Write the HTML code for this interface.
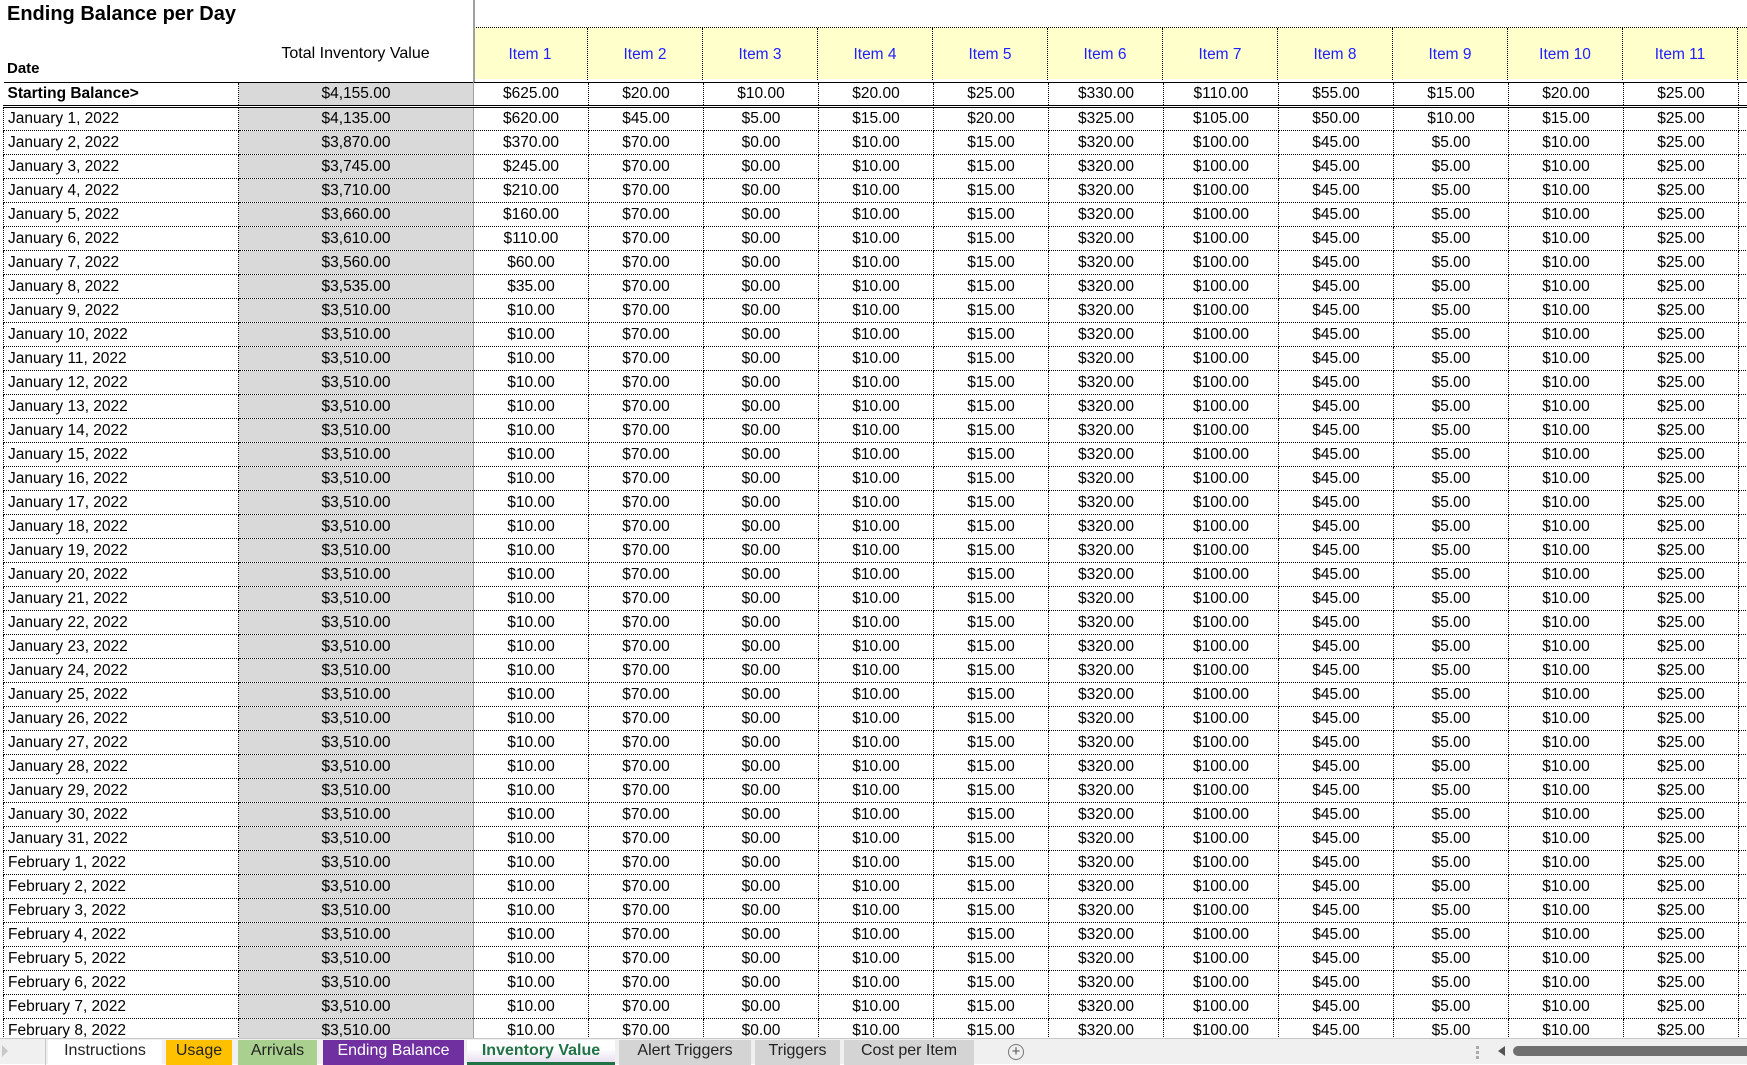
<!DOCTYPE html>
<html><head><meta charset="utf-8"><style>
*{margin:0;padding:0;box-sizing:border-box}
body{width:1747px;height:1064px;overflow:hidden;background:#fff;font-family:"Liberation Sans",Arial,sans-serif;font-size:15.5px;color:#000;position:relative}
.ab{position:absolute}
#title{left:7px;top:3px;font-size:20px;font-weight:bold}
#date{left:7px;top:60px;font-weight:bold;font-size:15px}
#tiv{left:238px;width:235px;top:45px;text-align:center;font-size:16px}
#yel{left:473px;top:27px;width:1274px;height:52px;background:#ffffcc;border-top:1px dotted #000}
.ih{position:absolute;top:0;height:52px;width:115px;line-height:54px;text-align:center;color:#2020ff;border-right:1px dotted #000}
#vline{left:473px;top:0;width:2px;height:82px;background:#a0a0a0}
table{position:absolute;left:3px;top:82px;border-collapse:collapse;table-layout:fixed;width:1744px}
td{height:24px;padding:0;text-align:center;border-right:1px dotted #000;border-bottom:1px dotted #000;white-space:nowrap;overflow:hidden;line-height:22px}
td:first-child{text-align:left;padding-left:4px;border-left:1px dotted #000}
td:nth-child(2){background:#d9d9d9;border-right:1px solid #a0a0a0}
tr.sb td{border-top:1px solid #000;border-bottom:3px double #000;font-weight:normal}
tr.sb td:first-child{font-weight:bold;border-left:none}
tr.sb td:nth-child(2){border-left:1px dotted #000}
#tabs{left:0;top:1038px;width:1747px;height:26px;background:#f0f0f0;border-top:1px solid #c6c6c6}
.t{position:absolute;top:1px;height:25px;line-height:22px;text-align:center;font-size:16px;background:#d4d4d4;color:#222}
</style></head><body>
<div class="ab" id="title">Ending Balance per Day</div>
<div class="ab" id="date">Date</div>
<div class="ab" id="tiv">Total Inventory Value</div>
<div class="ab" id="yel">
<div class="ih" style="left:0">Item 1</div><div class="ih" style="left:115px">Item 2</div><div class="ih" style="left:230px">Item 3</div><div class="ih" style="left:345px">Item 4</div><div class="ih" style="left:460px">Item 5</div><div class="ih" style="left:575px">Item 6</div><div class="ih" style="left:690px">Item 7</div><div class="ih" style="left:805px">Item 8</div><div class="ih" style="left:920px">Item 9</div><div class="ih" style="left:1035px">Item 10</div><div class="ih" style="left:1150px">Item 11</div>
</div>
<div class="ab" id="vline"></div>
<table>
<colgroup><col style="width:235px"><col style="width:235px"><col style="width:115px"><col style="width:115px"><col style="width:115px"><col style="width:115px"><col style="width:115px"><col style="width:115px"><col style="width:115px"><col style="width:115px"><col style="width:115px"><col style="width:115px"><col style="width:115px"><col style="width:9px"></colgroup>
<tr class="sb"><td>Starting Balance&gt;<td>$4,155.00<td>$625.00<td>$20.00<td>$10.00<td>$20.00<td>$25.00<td>$330.00<td>$110.00<td>$55.00<td>$15.00<td>$20.00<td>$25.00<td></tr>
<tr><td>January 1, 2022<td>$4,135.00<td>$620.00<td>$45.00<td>$5.00<td>$15.00<td>$20.00<td>$325.00<td>$105.00<td>$50.00<td>$10.00<td>$15.00<td>$25.00<td></tr>
<tr><td>January 2, 2022<td>$3,870.00<td>$370.00<td>$70.00<td>$0.00<td>$10.00<td>$15.00<td>$320.00<td>$100.00<td>$45.00<td>$5.00<td>$10.00<td>$25.00<td></tr>
<tr><td>January 3, 2022<td>$3,745.00<td>$245.00<td>$70.00<td>$0.00<td>$10.00<td>$15.00<td>$320.00<td>$100.00<td>$45.00<td>$5.00<td>$10.00<td>$25.00<td></tr>
<tr><td>January 4, 2022<td>$3,710.00<td>$210.00<td>$70.00<td>$0.00<td>$10.00<td>$15.00<td>$320.00<td>$100.00<td>$45.00<td>$5.00<td>$10.00<td>$25.00<td></tr>
<tr><td>January 5, 2022<td>$3,660.00<td>$160.00<td>$70.00<td>$0.00<td>$10.00<td>$15.00<td>$320.00<td>$100.00<td>$45.00<td>$5.00<td>$10.00<td>$25.00<td></tr>
<tr><td>January 6, 2022<td>$3,610.00<td>$110.00<td>$70.00<td>$0.00<td>$10.00<td>$15.00<td>$320.00<td>$100.00<td>$45.00<td>$5.00<td>$10.00<td>$25.00<td></tr>
<tr><td>January 7, 2022<td>$3,560.00<td>$60.00<td>$70.00<td>$0.00<td>$10.00<td>$15.00<td>$320.00<td>$100.00<td>$45.00<td>$5.00<td>$10.00<td>$25.00<td></tr>
<tr><td>January 8, 2022<td>$3,535.00<td>$35.00<td>$70.00<td>$0.00<td>$10.00<td>$15.00<td>$320.00<td>$100.00<td>$45.00<td>$5.00<td>$10.00<td>$25.00<td></tr>
<tr><td>January 9, 2022<td>$3,510.00<td>$10.00<td>$70.00<td>$0.00<td>$10.00<td>$15.00<td>$320.00<td>$100.00<td>$45.00<td>$5.00<td>$10.00<td>$25.00<td></tr>
<tr><td>January 10, 2022<td>$3,510.00<td>$10.00<td>$70.00<td>$0.00<td>$10.00<td>$15.00<td>$320.00<td>$100.00<td>$45.00<td>$5.00<td>$10.00<td>$25.00<td></tr>
<tr><td>January 11, 2022<td>$3,510.00<td>$10.00<td>$70.00<td>$0.00<td>$10.00<td>$15.00<td>$320.00<td>$100.00<td>$45.00<td>$5.00<td>$10.00<td>$25.00<td></tr>
<tr><td>January 12, 2022<td>$3,510.00<td>$10.00<td>$70.00<td>$0.00<td>$10.00<td>$15.00<td>$320.00<td>$100.00<td>$45.00<td>$5.00<td>$10.00<td>$25.00<td></tr>
<tr><td>January 13, 2022<td>$3,510.00<td>$10.00<td>$70.00<td>$0.00<td>$10.00<td>$15.00<td>$320.00<td>$100.00<td>$45.00<td>$5.00<td>$10.00<td>$25.00<td></tr>
<tr><td>January 14, 2022<td>$3,510.00<td>$10.00<td>$70.00<td>$0.00<td>$10.00<td>$15.00<td>$320.00<td>$100.00<td>$45.00<td>$5.00<td>$10.00<td>$25.00<td></tr>
<tr><td>January 15, 2022<td>$3,510.00<td>$10.00<td>$70.00<td>$0.00<td>$10.00<td>$15.00<td>$320.00<td>$100.00<td>$45.00<td>$5.00<td>$10.00<td>$25.00<td></tr>
<tr><td>January 16, 2022<td>$3,510.00<td>$10.00<td>$70.00<td>$0.00<td>$10.00<td>$15.00<td>$320.00<td>$100.00<td>$45.00<td>$5.00<td>$10.00<td>$25.00<td></tr>
<tr><td>January 17, 2022<td>$3,510.00<td>$10.00<td>$70.00<td>$0.00<td>$10.00<td>$15.00<td>$320.00<td>$100.00<td>$45.00<td>$5.00<td>$10.00<td>$25.00<td></tr>
<tr><td>January 18, 2022<td>$3,510.00<td>$10.00<td>$70.00<td>$0.00<td>$10.00<td>$15.00<td>$320.00<td>$100.00<td>$45.00<td>$5.00<td>$10.00<td>$25.00<td></tr>
<tr><td>January 19, 2022<td>$3,510.00<td>$10.00<td>$70.00<td>$0.00<td>$10.00<td>$15.00<td>$320.00<td>$100.00<td>$45.00<td>$5.00<td>$10.00<td>$25.00<td></tr>
<tr><td>January 20, 2022<td>$3,510.00<td>$10.00<td>$70.00<td>$0.00<td>$10.00<td>$15.00<td>$320.00<td>$100.00<td>$45.00<td>$5.00<td>$10.00<td>$25.00<td></tr>
<tr><td>January 21, 2022<td>$3,510.00<td>$10.00<td>$70.00<td>$0.00<td>$10.00<td>$15.00<td>$320.00<td>$100.00<td>$45.00<td>$5.00<td>$10.00<td>$25.00<td></tr>
<tr><td>January 22, 2022<td>$3,510.00<td>$10.00<td>$70.00<td>$0.00<td>$10.00<td>$15.00<td>$320.00<td>$100.00<td>$45.00<td>$5.00<td>$10.00<td>$25.00<td></tr>
<tr><td>January 23, 2022<td>$3,510.00<td>$10.00<td>$70.00<td>$0.00<td>$10.00<td>$15.00<td>$320.00<td>$100.00<td>$45.00<td>$5.00<td>$10.00<td>$25.00<td></tr>
<tr><td>January 24, 2022<td>$3,510.00<td>$10.00<td>$70.00<td>$0.00<td>$10.00<td>$15.00<td>$320.00<td>$100.00<td>$45.00<td>$5.00<td>$10.00<td>$25.00<td></tr>
<tr><td>January 25, 2022<td>$3,510.00<td>$10.00<td>$70.00<td>$0.00<td>$10.00<td>$15.00<td>$320.00<td>$100.00<td>$45.00<td>$5.00<td>$10.00<td>$25.00<td></tr>
<tr><td>January 26, 2022<td>$3,510.00<td>$10.00<td>$70.00<td>$0.00<td>$10.00<td>$15.00<td>$320.00<td>$100.00<td>$45.00<td>$5.00<td>$10.00<td>$25.00<td></tr>
<tr><td>January 27, 2022<td>$3,510.00<td>$10.00<td>$70.00<td>$0.00<td>$10.00<td>$15.00<td>$320.00<td>$100.00<td>$45.00<td>$5.00<td>$10.00<td>$25.00<td></tr>
<tr><td>January 28, 2022<td>$3,510.00<td>$10.00<td>$70.00<td>$0.00<td>$10.00<td>$15.00<td>$320.00<td>$100.00<td>$45.00<td>$5.00<td>$10.00<td>$25.00<td></tr>
<tr><td>January 29, 2022<td>$3,510.00<td>$10.00<td>$70.00<td>$0.00<td>$10.00<td>$15.00<td>$320.00<td>$100.00<td>$45.00<td>$5.00<td>$10.00<td>$25.00<td></tr>
<tr><td>January 30, 2022<td>$3,510.00<td>$10.00<td>$70.00<td>$0.00<td>$10.00<td>$15.00<td>$320.00<td>$100.00<td>$45.00<td>$5.00<td>$10.00<td>$25.00<td></tr>
<tr><td>January 31, 2022<td>$3,510.00<td>$10.00<td>$70.00<td>$0.00<td>$10.00<td>$15.00<td>$320.00<td>$100.00<td>$45.00<td>$5.00<td>$10.00<td>$25.00<td></tr>
<tr><td>February 1, 2022<td>$3,510.00<td>$10.00<td>$70.00<td>$0.00<td>$10.00<td>$15.00<td>$320.00<td>$100.00<td>$45.00<td>$5.00<td>$10.00<td>$25.00<td></tr>
<tr><td>February 2, 2022<td>$3,510.00<td>$10.00<td>$70.00<td>$0.00<td>$10.00<td>$15.00<td>$320.00<td>$100.00<td>$45.00<td>$5.00<td>$10.00<td>$25.00<td></tr>
<tr><td>February 3, 2022<td>$3,510.00<td>$10.00<td>$70.00<td>$0.00<td>$10.00<td>$15.00<td>$320.00<td>$100.00<td>$45.00<td>$5.00<td>$10.00<td>$25.00<td></tr>
<tr><td>February 4, 2022<td>$3,510.00<td>$10.00<td>$70.00<td>$0.00<td>$10.00<td>$15.00<td>$320.00<td>$100.00<td>$45.00<td>$5.00<td>$10.00<td>$25.00<td></tr>
<tr><td>February 5, 2022<td>$3,510.00<td>$10.00<td>$70.00<td>$0.00<td>$10.00<td>$15.00<td>$320.00<td>$100.00<td>$45.00<td>$5.00<td>$10.00<td>$25.00<td></tr>
<tr><td>February 6, 2022<td>$3,510.00<td>$10.00<td>$70.00<td>$0.00<td>$10.00<td>$15.00<td>$320.00<td>$100.00<td>$45.00<td>$5.00<td>$10.00<td>$25.00<td></tr>
<tr><td>February 7, 2022<td>$3,510.00<td>$10.00<td>$70.00<td>$0.00<td>$10.00<td>$15.00<td>$320.00<td>$100.00<td>$45.00<td>$5.00<td>$10.00<td>$25.00<td></tr>
<tr><td>February 8, 2022<td>$3,510.00<td>$10.00<td>$70.00<td>$0.00<td>$10.00<td>$15.00<td>$320.00<td>$100.00<td>$45.00<td>$5.00<td>$10.00<td>$25.00<td></tr>
</table>
<div class="ab" id="tabs">
<div class="ab" style="left:2px;top:6px;width:0;height:0;border-top:6px solid transparent;border-bottom:6px solid transparent;border-left:6px solid #c8c8c8"></div>
<div class="ab" style="left:45px;top:0;width:1px;height:26px;background:#c6c6c6"></div>
<div class="t" style="left:48px;width:114px;background:#fff">Instructions</div>
<div class="t" style="left:166px;width:66px;background:#ffc000">Usage</div>
<div class="t" style="left:238px;width:79px;background:#a9d08e">Arrivals</div>
<div class="t" style="left:323px;width:141px;background:#7030a0;color:#fff">Ending Balance</div>
<div class="t" style="left:467px;width:148px;color:#217346;font-weight:bold;border-bottom:3px solid #217346;background:linear-gradient(#fff 40%,#e8dff0)">Inventory Value</div>
<div class="t" style="left:619px;width:132px">Alert Triggers</div>
<div class="t" style="left:755px;width:85px">Triggers</div>
<div class="t" style="left:844px;width:130px">Cost per Item</div>
<div class="ab" style="left:1008px;top:5px;width:16px;height:16px;border:1px solid #777;border-radius:50%;text-align:center;line-height:13px;font-size:15px;color:#555">+</div>
<div class="ab" style="left:1476px;top:7px;width:3px;height:3px;background:#aaa;box-shadow:0 5px 0 #aaa,0 10px 0 #aaa"></div>
<div class="ab" style="left:1498px;top:7px;width:0;height:0;border-top:5px solid transparent;border-bottom:5px solid transparent;border-right:7px solid #555"></div>
<div class="ab" style="left:1513px;top:7px;width:240px;height:10px;background:#707070;border-radius:5px"></div>
</div>
</body></html>
